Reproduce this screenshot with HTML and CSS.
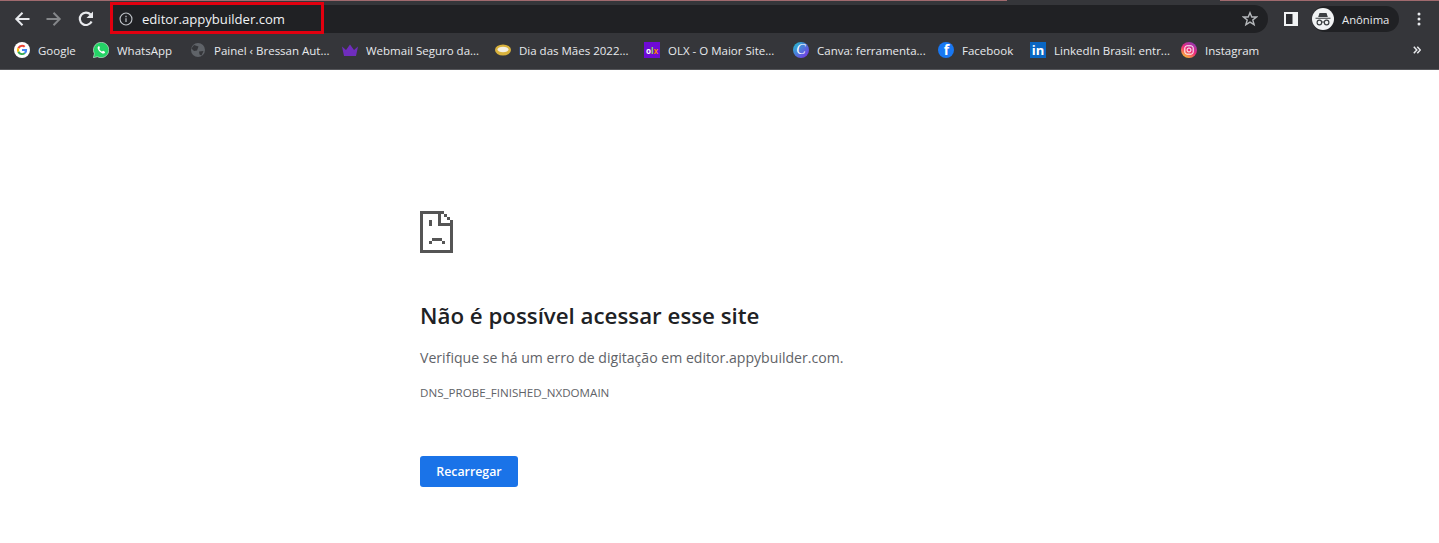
FILE: index.html
```html
<!DOCTYPE html>
<html lang="pt-BR">
<head>
<meta charset="utf-8">
<title>editor.appybuilder.com</title>
<link rel="stylesheet" href="styles.css">
</head>
<body>
<header class="chrome">
  <div class="tabline">
    <span class="tab-glow glow-left"></span>
    <span class="tab-gap"></span>
    <span class="tab-glow glow-right"></span>
  </div>
  <div class="toolbar">
    <div class="nav">
      <svg class="nav-icon" viewBox="0 0 16 16"><path d="M15.500 8H3M8.500 1.800 2.300 8 8.500 14.200" fill="none" stroke="#e8eaed" stroke-width="2"/></svg>
      <svg class="nav-icon" viewBox="0 0 16 16"><path d="M.5 8H13M7.500 1.800 13.700 8 7.500 14.200" fill="none" stroke="#85878a" stroke-width="2"/></svg>
      <svg class="nav-icon" viewBox="0 0 16 16"><path d="M13.600 10.500A6.200 6.200 0 1 1 12.600 3.600" fill="none" stroke="#e8eaed" stroke-width="2.200"/><path d="M15 .5v6.500H8.500z" fill="#e8eaed"/></svg>
    </div>
    <div class="omnibox">
      <svg class="info" viewBox="0 0 16 16"><circle cx="8" cy="8" r="6.800" fill="none" stroke="#bdc1c6" stroke-width="1.300"/><path d="M8 7.200v4.300M8 4.300v1.600" stroke="#bdc1c6" stroke-width="1.400"/></svg>
      <span class="url">editor.appybuilder.com</span>
      <svg class="star" viewBox="0 0 16 16"><path d="M8 1.700 9.800 6h4.700l-3.700 3 1.300 4.700L8 11.100l-4.100 2.600L5.200 9 1.500 6h4.700z" fill="none" stroke="#b4b7ba" stroke-width="1.400"/></svg>
    </div>
    <div class="actions">
      <svg class="panel" viewBox="0 0 14 14"><path d="M0 0h14v14H0z" fill="#f1f3f4"/><path d="M2 2h6.500v10H2z" fill="#2b2c30"/></svg>
      <div class="profile">
        <span class="avatar">
          <svg viewBox="0 0 22 22"><path d="M7.500 5h7l1.300 4H6.200zM3.500 9.700h15v1.100h-15z" fill="#3c4043"/><circle cx="7.400" cy="14.500" r="2.300" fill="none" stroke="#3c4043" stroke-width="1.200"/><circle cx="14.600" cy="14.500" r="2.300" fill="none" stroke="#3c4043" stroke-width="1.200"/><path d="M9.500 14h3" stroke="#3c4043"/></svg>
        </span>
        <span class="profile-name">Anônima</span>
      </div>
      <svg class="menu" viewBox="0 0 4 14"><circle cx="2" cy="2" r="1.500" fill="#e8eaed"/><circle cx="2" cy="7" r="1.500" fill="#e8eaed"/><circle cx="2" cy="12" r="1.500" fill="#e8eaed"/></svg>
    </div>
  </div>
  <div class="bookmarks">
    <a class="bookmark">
      <svg class="fav" viewBox="0 0 16 16"><circle cx="8" cy="8" r="8" fill="#fff"/><path d="M8 2.800a5.200 5.200 0 0 1 3.400 1.300L10 5.500A3 3 0 0 0 5.200 7L3.500 5.600A5.200 5.200 0 0 1 8 2.800z" fill="#ea4335"/><path d="M3.500 5.600 5.200 7a3 3 0 0 0 0 2L3.500 10.400a5.200 5.200 0 0 1 0-4.800z" fill="#fbbc05"/><path d="M3.500 10.400 5.200 9A3 3 0 0 0 10 10.500l1.500 1.200A5.200 5.200 0 0 1 3.500 10.400z" fill="#34a853"/><path d="M13.100 7H8v2.100h2.800a2.500 2.500 0 0 1-.8 1.400l1.500 1.200A5.200 5.200 0 0 0 13.100 7z" fill="#4285f4"/></svg>
      <span>Google</span>
    </a>
    <a class="bookmark">
      <svg class="fav" viewBox="0 0 16 16"><path d="M.3 15.700 1.400 11.700A7.700 7.700 0 1 1 4.400 14.700z" fill="#25d366" stroke="#fff" stroke-width=".5"/><path d="M5.600 4.200c-.8.500-1.200 1.400-.8 2.600.7 2 2.500 3.900 4.600 4.600 1.200.4 2.200-.1 2.600-1 .2-.5-.1-.8-.5-1l-1.200-.6c-.4-.2-.6 0-.9.400-.2.300-.4.300-.7.200-1-.4-1.800-1.200-2.300-2.200-.1-.3 0-.5.200-.7.400-.4.400-.6.200-1l-.5-1.200c-.2-.4-.4-.4-.7-.1z" fill="#fff"/></svg>
      <span>WhatsApp</span>
    </a>
    <a class="bookmark">
      <svg class="fav" viewBox="0 0 16 16"><circle cx="8" cy="8" r="7" fill="#5f6368"/><path d="M4 3 8.500 4.500 7 8.500l-3 .5-2.500-2.500zM9 9.500l4.500-.5-2 4.500-2-1z" fill="#35363a"/></svg>
      <span>Painel ‹ Bressan Aut...</span>
    </a>
    <a class="bookmark">
      <svg class="fav" viewBox="0 0 16 16"><path d="M0 4.500l4 3.500L8 2.500 12 8l4-3.500L14 14H2z" fill="#6f2dbd"/></svg>
      <span>Webmail Seguro da...</span>
    </a>
    <a class="bookmark">
      <svg class="fav" viewBox="0 0 16 16"><ellipse cx="8" cy="8" rx="8" ry="5.500" fill="#d9b23c"/><ellipse cx="8" cy="7.500" rx="5.500" ry="2.800" fill="#f4efe0"/></svg>
      <span>Dia das Mães 2022...</span>
    </a>
    <a class="bookmark">
      <span class="fav olx"><span class="olx-o">o</span><span class="olx-l">l</span><span class="olx-x">x</span></span>
      <span>OLX - O Maior Site...</span>
    </a>
    <a class="bookmark">
      <span class="fav canva">C</span>
      <span>Canva: ferramenta...</span>
    </a>
    <a class="bookmark">
      <span class="fav facebook">f</span>
      <span>Facebook</span>
    </a>
    <a class="bookmark">
      <span class="fav linkedin">in</span>
      <span>LinkedIn Brasil: entr...</span>
    </a>
    <a class="bookmark">
      <svg class="fav" viewBox="0 0 16 16"><defs><linearGradient id="ig" x1=".2" y1="1" x2=".8" y2="0"><stop offset="0" stop-color="#fdc830"/><stop offset=".5" stop-color="#ee2a7b"/><stop offset="1" stop-color="#8a3ab9"/></linearGradient></defs><circle cx="8" cy="8" r="8" fill="url(#ig)"/><rect x="3.800" y="3.800" width="8.400" height="8.400" rx="2.200" fill="none" stroke="#fff"/><circle cx="8" cy="8" r="2" fill="none" stroke="#fff"/></svg>
      <span>Instagram</span>
    </a>
    <svg class="more" viewBox="0 0 8 8"><path d="M.8.8 3.800 4 .8 7.200M4.300.8 7.300 4 4.300 7.200" fill="none" stroke="#e8eaed" stroke-width="1.500"/></svg>
  </div>
  <div class="highlight"></div>
</header>
<main class="error">
  <svg class="sad" viewBox="0 0 33 42">
    <path d="M0 0h24v3H3v36h27V12h3v30H0z" fill="#555"/>
    <path d="M18 0h3v12h12v3H18z" fill="#555"/>
    <path d="M24 3h3v3h-3zM27 6h3v3h-3zM30 9h3v3h-3z" fill="#555"/>
    <path d="M9 9h3v6H9zM12 27h10v3H12zM9 30h3v3H9zM22 30h3v3h-3z" fill="#555"/>
  </svg>
  <h1 class="title">Não é possível acessar esse site</h1>
  <p class="message">Verifique se há um erro de digitação em editor.appybuilder.com.</p>
  <p class="code">DNS_PROBE_FINISHED_NXDOMAIN</p>
  <button class="reload">Recarregar</button>
</main>
</body>
</html>
```
FILE: styles.css
```css
* { box-sizing: border-box; }
html, body { margin: 0; padding: 0; height: 100%; background: #fff; overflow: hidden; }
body { font-family: "Open Sans", "Noto Sans", "Liberation Sans", sans-serif; }

.chrome { position: relative; background: #35363a; height: 70px; border-bottom: 1px solid #55565a; display: flex; flex-direction: column; }

.tabline { height: 5px; display: flex; align-items: flex-start; }
.tab-glow { height: 1px; background: #a06a6e; display: block; }
.glow-left { width: 1007px; }
.tab-gap { width: 213px; }
.glow-right { flex: 1; }

.toolbar { height: 28px; display: flex; align-items: center; }
.nav { width: 110px; display: flex; align-items: center; gap: 16px; padding-left: 14px; }
.nav-icon { width: 16px; height: 16px; flex: none; }

.omnibox { width: 1158px; height: 28px; background: #202124; border-radius: 0 14px 14px 0; display: flex; align-items: center; padding: 0 10px 0 9px; }
.info { width: 14px; height: 14px; flex: none; }
.url { margin-left: 9px; color: #f1f3f4; font-size: 13.100px; line-height: 28px; flex: 1; }
.star { width: 16px; height: 16px; flex: none; }

.actions { flex: 1; display: flex; align-items: center; padding-left: 16px; }
.panel { width: 14px; height: 14px; flex: none; }
.profile { margin-left: 14px; width: 87px; height: 26px; background: #202124; border-radius: 13px; display: flex; align-items: center; }
.avatar { width: 22px; height: 22px; background: #f1f3f4; border-radius: 50%; flex: none; display: flex; }
.avatar svg { width: 22px; height: 22px; }
.profile-name { margin-left: 8px; color: #e8eaed; font-size: 11.300px; }
.menu { width: 4px; height: 14px; margin-left: 18px; flex: none; }

.bookmarks { height: 36px; display: grid; grid-template-columns: 79px 97px 152px 153px 149px 149px 145px 92px 151px 1fr 8px; align-items: center; padding: 0 18px 2px 14px; }
.bookmark { display: flex; align-items: center; gap: 8px; color: #e8eaed; font-size: 11.500px; white-space: nowrap; }
.fav { width: 16px; height: 16px; flex: none; display: flex; align-items: center; justify-content: center; }
.olx { background: #6e0ad6; font-size: 8px; font-weight: 700; }
.olx-o { color: #fff; }
.olx-l { color: #8ce563; }
.olx-x { color: #f28000; }
.canva { border-radius: 50%; background: linear-gradient(135deg, #20c4cb, #7d2ae8); color: #fff; font-family: "Liberation Serif", serif; font-style: italic; font-size: 14px; }
.facebook { border-radius: 50%; background: #1877f2; color: #fff; font-weight: 700; font-size: 14px; line-height: 16px; padding-left: 1px; }
.linkedin { background: #0a66c2; color: #fff; font-weight: 700; font-size: 13px; line-height: 16px; }
.more { width: 8px; height: 8px; }

.highlight { position: absolute; left: 110px; top: 2px; width: 214px; height: 32px; border: 3px solid #e2000f; }

.error { width: 600px; margin-left: 420px; padding-top: 141px; display: flex; flex-direction: column; align-items: flex-start; }
.sad { width: 33px; height: 42px; display: block; }
.title { margin: 47px 0 0; font-size: 22.300px; line-height: 32px; font-weight: 600; color: #202124; }
.message { margin: 16px 0 0; font-size: 14.100px; line-height: 20px; color: #5f6368; }
.code { margin: 17px 0 0; font-size: 11.600px; line-height: 16px; color: #5f6368; }
.reload { margin-top: 55px; width: 98px; height: 31px; border: 0; border-radius: 3px; background: #1a73e8; color: #fff; font: 600 12.350px "Open Sans", "Noto Sans", sans-serif; padding: 0; }
```
